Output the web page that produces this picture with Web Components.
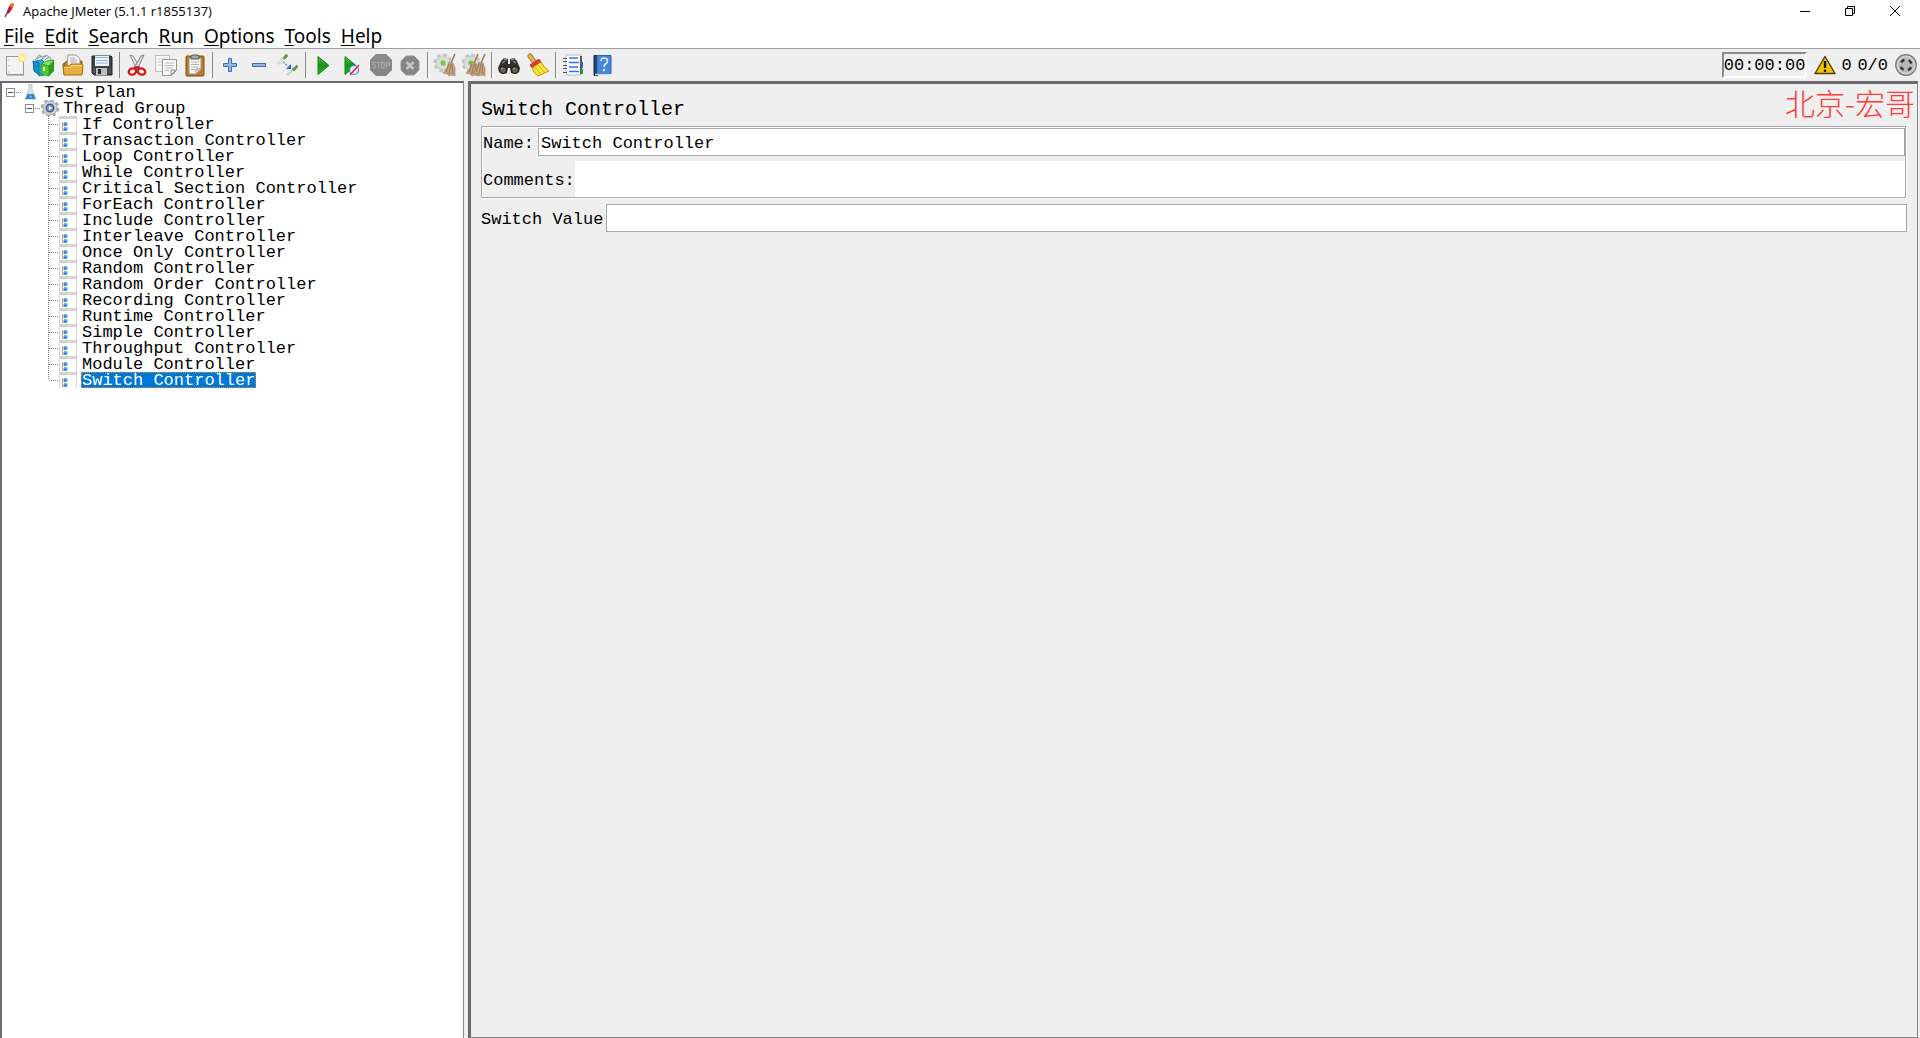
<!DOCTYPE html>
<html lang="en">
<head>
<meta charset="utf-8">
<title>Apache JMeter (5.1.1 r1855137)</title>
<style>
html, body { height: 100%; margin: 0; background: #fff; }
</style>
</head>
<body>
<jm-window></jm-window>

<script>
const svg = (body, w = 24, h = 24) =>
  `<svg width="${w}" height="${h}" viewBox="0 0 ${w} ${h}" aria-hidden="true">${body}</svg>`;

const cog = (x, y) => `<g transform="translate(${x} ${y})"><circle r="8" fill="none" stroke="#c3c5c0" stroke-width="3" stroke-dasharray="3.600 2.683"/><circle r="7" fill="#dcdedb" stroke="#c3c5c1"/><circle r="2.800" fill="#6cc93a" stroke="#b2d5a0"/></g>`;
const broom = (x) => `<g transform="translate(${x} 0)"><path d="M11 1L7 10" stroke="#a07a55" stroke-width="1.600"/><path d="M5 9l4 1 2 5v8l-3-1-3 1-2-2-4-1 4-5z" fill="#c3a17c" stroke="#a58057" stroke-width=".6"/><path d="M5 11l-3 8M7 11l-2 10M8 11l1 10" stroke="#8f6b48" stroke-width=".7"/></g>`;

const ICONS = {
  new: `<rect x="3.500" y="3.500" width="17" height="18" fill="#f3f3f3" stroke="#999b98"/><path d="M4 22.500h17" stroke="#bbb"/><path d="M6 6v2M6 12v2M6 18v2" stroke="#bbb"/><circle cx="19" cy="5" r="3.500" fill="#fff7a0" stroke="#f6e880" stroke-width="1.500"/><circle cx="19" cy="5" r="1.500" fill="#fff"/>`,
  templates: `<path d="M3 7l4-5 4 2 3-2 5 3-1 4-9 2z" fill="#dfe9ea" stroke="#8da0a4"/><path d="M5 6l4-3M9 7l5-4M13 7l4-3" stroke="#7b9095"/><path d="M1 8l6 2v12l-5-4z" fill="#1590c8" stroke="#0d6c9c"/><path d="M4 8l6-1 2 2v13l-5 1V10z" fill="#27aee6" stroke="#1478a4"/><path d="M9 11l8 2v10l-8-2z" fill="#4bcf2e" stroke="#289117" stroke-width=".8"/><path d="M9 11l6-3 7-1-5 6z" fill="#8be56c" stroke="#289117" stroke-width=".8"/><path d="M17 13l5-6v11l-5 5z" fill="#2c9c1b"/><path d="M12 14v4" stroke="#def7d5" stroke-width="2"/>`,
  open: `<path d="M2 11l4-3h15v13H3z" fill="#b57b17" stroke="#8b5d11"/><path d="M6 14L7 2h8l4 4v8z" fill="#f7f7f5" stroke="#999"/><path d="M9 5h5M9 7h7M9 9h7" stroke="#aaa"/><path d="M2 13h6l2-2h11l1 1-1 10H3z" fill="#e7ae3e" stroke="#a87012"/><path d="M3.500 14.500h6l2-2h9" stroke="#f8d57f" fill="none"/>`,
  save: `<path d="M3 3h18l1 1v18H4l-2-2V3z" fill="#3e4348" stroke="#222"/><rect x="5" y="3" width="14" height="10" fill="#eef5fb"/><path d="M5 4.500h14M6 7.500h12M6 10h12" stroke="#8fb1d8"/><rect x="6" y="15" width="11" height="7" fill="#b8bec4"/><rect x="8" y="16" width="3" height="5" fill="#252a2e"/><path d="M4 15v5M20 15v5" stroke="#60666c"/>`,
  cut: `<path d="M5 2l3 1 7 12-3 2z" fill="#eaeaea" stroke="#8d8d8d"/><path d="M19 2l-3 1-7 12 3 2z" fill="#dcdcdc" stroke="#858585"/><ellipse cx="7.500" cy="18.500" rx="3.800" ry="3" fill="#fff" stroke="#d61c1c" stroke-width="2.400" transform="rotate(-22 7.500 18.500)"/><ellipse cx="16.500" cy="18.500" rx="3.800" ry="3" fill="#fff" stroke="#d61c1c" stroke-width="2.400" transform="rotate(22 16.500 18.500)"/><path d="M10 15l2-1 2 1" stroke="#b31414" stroke-width="2" fill="none"/>`,
  copy: `<path d="M1.500 2.500h14v16h-14z" fill="#f5f5f5" stroke="#bcbcbc"/><path d="M4 6h8M4 9h5M4 12h4" stroke="#ccc"/><path d="M8.500 6.500h14v11l-5 5h-9z" fill="#f8f8f8" stroke="#999"/><path d="M11 10h9M11 12.500h9M11 15h8M11 17.500h4" stroke="#bbb"/><path d="M22 17l-5 5v-5z" fill="#ddd" stroke="#999"/>`,
  paste: `<rect x="3" y="3" width="18" height="20" rx="1" fill="#bd7720" stroke="#87500e"/><path d="M6 5h12v12l-4 4H6z" fill="#f5f5f3" stroke="#999"/><path d="M8 5V3l2-1h4l2 1v3H8z" fill="#a9aaa7" stroke="#555753"/><path d="M8 9h8M8 11.500h8M8 14h7M8 16.500h4" stroke="#b5b5b5"/><path d="M18 16l-5 5v-5z" fill="#ddd" stroke="#999"/>`,
  plus: `<path d="M10.500 5.500h3v5h5v3h-5v5h-3v-5h-5v-3h5z" fill="#8fb9e5" stroke="#3f72b3"/>`,
  minus: `<rect x="5.500" y="10.500" width="13" height="3" fill="#8fb9e5" stroke="#3f72b3"/>`,
  toggle: `<path d="M2 11l6-6" stroke="#ccd0c9" stroke-width="2.600"/><path d="M3 10l4-4" stroke="#fff"/><path d="M7 5l3-4 2 2-3 3z" fill="#6a9a58" stroke="#5a7d4d" stroke-width=".6"/><path d="M11 22l6-5" stroke="#ccd0c9" stroke-width="2.200"/><path d="M16 16l5-4 1 2-4 4z" fill="#64a04c" stroke="#5a7d4d" stroke-width=".6"/><path d="M7 9l5 4" stroke="#5b9be6" stroke-width="1.400" stroke-dasharray="2 1"/><path d="M15 11v5h-5z" fill="#1c6fd0"/>`,
  start: `<defs><linearGradient id="g" x2="0" y2="1"><stop stop-color="#53bf49"/><stop offset=".5" stop-color="#159419"/><stop offset="1" stop-color="#14c51a"/></linearGradient></defs><path d="M7 3.500l11 9-11 9z" fill="url(#g)" stroke="#0c8417"/>`,
  startnow: `<defs><linearGradient id="g" x2="0" y2="1"><stop stop-color="#53bf49"/><stop offset=".5" stop-color="#159419"/><stop offset="1" stop-color="#14c51a"/></linearGradient></defs><path d="M5 3.500l11 9-11 9z" fill="url(#g)" stroke="#0c8417"/><circle cx="14" cy="17" r="4.500" fill="#e0ebfa" stroke="#4a7fc8" stroke-width="1.200"/><path d="M10 22l9-10" stroke="#dd2c2c" stroke-width="1.400"/>`,
  stop: `<path d="M7 1h10l6 6v10l-6 6H7l-6-6V7z" fill="#858585"/><path d="M7.500 2h9l5.500 5.500V12H2V7.500z" fill="#8b8b8b"/><g fill="none" stroke="#a8a8a8" stroke-width="1.200"><path d="M6.500 9.500H4v2.500h2.300v3H3.500M7.500 9.500h4M9.500 9.500v6M12.500 9.500h2.700v5.300h-2.700zM17.500 15.500v-6h3v3h-3"/></g>`,
  shutdown: `<path d="M8 3h8l5 5v9l-5 5H8l-5-5V8z" fill="#858585" stroke="#999"/><path d="M8.500 9l7 7M15.500 9l-7 7" stroke="#c4c4c4" stroke-width="2.600"/>`,
  clear: cog(10, 10) + broom(11),
  clearall: cog(9, 10) + broom(5) + broom(12),
  search: `<path d="M7 5l4 1v5h2V6l4-1 3 3 3 7-1 4-4 2-4-1-1-5h-2l-1 5-4 1-4-2-1-4 3-7z" fill="#34322f"/><path d="M7 6l3 1M14 7l3-1M5 10l3-2M16 8l3 2" stroke="#8b8780" stroke-width="1.400"/><circle cx="6" cy="17" r="3.500" fill="#65605a" stroke="#171614"/><circle cx="18" cy="17" r="3.500" fill="#65605a" stroke="#171614"/><path d="M4 16l2-1M16 16l2-1" stroke="#c89d8c"/>`,
  broom: `<path d="M4 3l5 7" stroke="#b9770f" stroke-width="5" stroke-linecap="round"/><path d="M4 3l5 7" stroke="#e9b45c" stroke-width="3" stroke-linecap="round"/><path d="M4 12l9-6 2 3-9 6z" fill="#e03a35" stroke="#a51d1d" stroke-width=".6"/><path d="M6 15l9-6q3 6 8 9l-11 5q-5-3-6-8z" fill="#f7e23c" stroke="#b79507"/><path d="M9 14l6 8M12 12l7 8" stroke="#c9ab20" stroke-width=".8"/>`,
  log: `<rect x="5" y="2" width="15" height="20" fill="#fff" stroke="#bbb"/><path d="M20 3v18" stroke="#222" stroke-width="1.400"/><path d="M20 9h2v6h-2z" fill="#2d61e0"/><path d="M20 16h2v5h-2z" fill="#22a022"/><path d="M8 5h9M8 9.500h10M8 14h9M8 18.500h10" stroke="#2f72e8" stroke-width="1.300"/><g stroke="#555"><path d="M2 5.500h4M2 8.500h4M2 12.500h4M2 15.500h4M2 19.500h4"/></g>`,
  help: `<path d="M4 2.500h4v20H4z" fill="#203d61" stroke="#152b46"/><path d="M7 2.500h14v18H7z" fill="#4888d7" stroke="#2b65ad"/><path d="M5 21.500h15" stroke="#d8dbe0" stroke-width="1.500"/><path d="M11 8q0-3 3.200-3T17.500 8q0 2-2 3-1.500 1-1.500 3" fill="none" stroke="#dcecff" stroke-width="1.600"/><circle cx="14" cy="17" r="1.200" fill="#dcecff"/>`,
  warn: `<path d="M12 3.500L22 20.500H2z" fill="#f5c400" stroke="#4c3f06" stroke-width="1.400" stroke-linejoin="round"/><path d="M12 8v7" stroke="#111" stroke-width="2.400"/><circle cx="12" cy="17.800" r="1.300" fill="#111"/>`,
  threads: `<circle cx="12" cy="12" r="10.300" fill="#cfcfcf" stroke="#777" stroke-width="1.200"/><circle cx="12" cy="12" r="7.800" fill="#b5b5b5" stroke="#ccc"/><circle cx="12" cy="12" r="5.500" fill="none" stroke="#303030" stroke-width="2.400" stroke-dasharray="4 4.639" stroke-dashoffset="-2.300"/>`
};

const NODE_ICONS = {
  plan: svg(`<path d="M8 0h3v6l4 9H4l4-9z" fill="#dfe4ea" stroke="#b3bac2" stroke-width=".8"/><path d="M6.500 10h6l2 5H4.500z" fill="#2580d8"/><path d="M8 12h2v2" stroke="#9ccaf5" fill="none"/>`, 20, 16),
  group: svg(`<circle cx="10" cy="8" r="8" fill="none" stroke="#a9abad" stroke-width="2.600" stroke-dasharray="3.600 2.683"/><circle cx="10" cy="8" r="7" fill="#d3d4d6" stroke="#a9abad"/><circle cx="10" cy="8" r="3.800" fill="#7f9ac6" stroke="#3e5a8a" stroke-width="1.400"/><path d="M9 6l3 2-3 2z" fill="#fff"/>`, 20, 16),
  leaf: svg(`<rect x="0" y="0" width="18" height="16" fill="#fff"/><path d="M0 1.500h18" stroke="#cfcfcf" stroke-width="3"/><path d="M9 1.500h7" stroke="#dedede"/><path d="M.5 0v16M17.500 3v13" stroke="#d5d5d5"/><path d="M3.500 6v9M3.500 8.500h2M3.500 14.500h2" stroke="#aaa" fill="none"/><circle cx="6.500" cy="8" r="2" fill="#2f7fd6"/><circle cx="6.500" cy="13" r="2" fill="#2f7fd6"/><path d="M5.500 7h2M5.500 12h2" stroke="#a9cdf2"/>`, 18, 16)
};

function define(name, css, html) {
  customElements.define(name, class extends HTMLElement {
    constructor() {
      super();
      const t = document.createElement('template');
      t.innerHTML = `<style>*{box-sizing:border-box}${css}</style>${typeof html === 'function' ? html(this) : html}`;
      this.attachShadow({ mode: 'open' }).append(t.content.cloneNode(true));
    }
  });
}

define('jm-titlebar', `
  :host { display: flex; align-items: center; height: 24px; padding: 0 3px 2px 4px; background: #fff;
    font: 13px/22px "Open Sans", "Noto Sans CJK SC", sans-serif; color: #000; }
  .title { flex: 1; margin-left: 7px; }
  svg { display: block; }
  button { width: 45px; height: 20px; padding: 0; border: 0; background: none; display: grid; place-items: center; }`,
  `${svg(`<path d="M1 14l2-4" stroke="#5c2a6b" stroke-width="1.200"/><path d="M3 11Q3 4 8 0l2 1Q8 8 4 11z" fill="#c81f3c"/><path d="M6 3l2-3 2 1-1 4z" fill="#ef7b25"/><path d="M3 11q0-3 1-5l2 3z" fill="#7d1f69"/>`, 12, 16)}
  <span class="title">Apache JMeter (5.1.1 r1855137)</span>
  <button aria-label="Minimize">${svg('<path d="M1 6.500h10" stroke="#000"/>', 12, 12)}</button>
  <button aria-label="Restore">${svg('<path d="M1.500 3.500h7v7h-7zM3.500 3V1.500h7v7H9" fill="none" stroke="#000"/>', 12, 12)}</button>
  <button aria-label="Close">${svg('<path d="M1 1l10 10M11 1L1 11" stroke="#000"/>', 12, 12)}</button>`);

define('jm-menubar', `
  :host { display: block; background: #fff; }
  nav { display: flex; height: 24px; padding-left: 4px; gap: 10px; }
  button { display: block; border: 0; padding: 0; background: none; color: #000;
    font: 19px/24px "Noto Sans", "Noto Sans CJK SC", sans-serif; }
  button::first-letter { text-decoration: underline; text-decoration-thickness: 1px; text-underline-offset: 2px; }`,
  `<nav>${['File', 'Edit', 'Search', 'Run', 'Options', 'Tools', 'Help'].map(t => `<button>${t}</button>`).join('')}</nav>`);

define('jm-tool', `
  :host { display: block; }
  button { display: grid; place-items: center; width: 29px; height: 32px; padding: 0; border: 0; background: none; }
  svg { display: block; }`,
  el => `<button aria-label="${el.getAttribute('icon')}">${svg(ICONS[el.getAttribute('icon')])}</button>`);

define('jm-separator', `
  :host { display: flex; justify-content: center; width: 6px; height: 26px; }
  i { width: 1px; background: #8a8a8a; }`, `<i></i>`);

const GROUPS = [['new', 'templates', 'open', 'save'], ['cut', 'copy', 'paste'], ['plus', 'minus', 'toggle'],
  ['start', 'startnow', 'stop', 'shutdown'], ['clear', 'clearall'], ['search', 'broom'], ['log', 'help']];

define('jm-toolbar', `
  :host { display: flex; align-items: center; justify-content: space-between; height: 33px; padding-right: 2px;
    border-top: 1px solid #a0a0a0; background: #efefef;
    font: 17px/24px "Liberation Mono", "Noto Sans CJK SC", monospace; color: #000; }
  .tools, .status { display: flex; align-items: center; }
  output { display: block; height: 26px; border: 2px solid; border-color: #8a8a8a #fff #fff #8a8a8a; }
  .status > svg { display: block; }
  .status > span { padding-top: 2px; }
  .warn { margin: 0 4px 0 6px; }
  .errors { width: 16px; }
  .active { margin-right: 6px; }`,
  `<div class="tools">${GROUPS.map(g => g.map(i => `<jm-tool icon="${i}"></jm-tool>`).join('')).join('<jm-separator></jm-separator>')}</div>
  <div class="status"><output>00:00:00</output>
    <svg class="warn" width="24" height="24" viewBox="0 0 24 24" aria-hidden="true">${ICONS.warn}</svg><span class="errors">0</span><span class="active">0/0</span>${svg(ICONS.threads)}</div>`);

define('jm-node', `
  :host { display: block; }
  .row { display: flex; align-items: center; height: 16px; }
  svg { display: block; flex: none; }
  .label { height: 16px; line-height: 18px; margin-left: 2px; padding: 0 1px; white-space: pre; }
  :host([kind=leaf]) .label { margin-left: 4px; }
  :host([selected]) .label { background: #0078d7; color: #fff; outline: 1px dotted #e08a28; outline-offset: -1px; }
  .kids { padding-left: 19px; }
  :host([kind=group]) .kids { padding-left: 21px; }`,
  el => {
    const kind = el.getAttribute('kind');
    const guide = kind === 'leaf'
      ? svg(`<path d="M4.500 0v${el.hasAttribute('last') ? 8 : 16}M5 8.500h10" stroke="#808080" stroke-dasharray="1 1"/>`, 15, 16)
      : svg(`<rect x="2.500" y="4.500" width="8" height="8" fill="#fdfdfd" stroke="#8c8c8c"/><path d="M4 8.500h5" stroke="#2c4a8c"/><path d="M12 8.500h5" stroke="#808080" stroke-dasharray="1 1"/>`, 17, 16);
    return `<div class="row">${guide}${NODE_ICONS[kind]}<span class="label">${el.getAttribute('label')}</span></div><div class="kids"><slot></slot></div>`;
  });

const CONTROLLERS = ['If', 'Transaction', 'Loop', 'While', 'Critical Section', 'ForEach', 'Include', 'Interleave', 'Once Only',
  'Random', 'Random Order', 'Recording', 'Runtime', 'Simple', 'Throughput', 'Module', 'Switch'];

define('jm-tree', `
  :host { display: block; background: #fff; border: 2px solid #6b6b6f; border-width: 2px 1px 0 2px; border-right-color: #8a8a8f;
    padding: 1px 0 0 2px; font: 17px/16px "Liberation Mono", "Noto Sans CJK SC", monospace; color: #000; }`,
  `<jm-node kind="plan" label="Test Plan"><jm-node kind="group" label="Thread Group">${
    CONTROLLERS.map((c, i) => `<jm-node kind="leaf" label="${c} Controller"${i === CONTROLLERS.length - 1 ? ' last selected' : ''}></jm-node>`).join('')
  }</jm-node></jm-node>`);

define('jm-form', `
  :host { display: block; position: relative; background: #efefef; border: 3px solid #6b6b6f; border-right: 1px solid #85858c; border-bottom: 1px solid #85858c;
    padding: 12px 10px 0 10px; font: 17px/24px "Liberation Mono", "Noto Sans CJK SC", monospace; color: #000; }
  h1 { margin: 0 0 2px; font-size: 20px; line-height: 28px; font-weight: 400; }
  .box { border: 1px solid #a6a6ac; box-shadow: 1px 1px #fff, inset 1px 1px #fff; padding: 1px 0 0 1px; margin-right: 1px; }
  .field { display: flex; align-items: center; }
  .name { gap: 4px; }
  .comments { margin-top: 5px; }
  .value { margin-top: 6px; gap: 3px; }
  label { padding-top: 3px; }
  input { flex: 1; min-width: 0; height: 28px; margin: 0; padding: 2px 2px 0; border: 1px solid #a6a6ac; border-radius: 0; background: #fff; font: inherit; color: inherit; }
  .comments input { height: 36px; border: 0; }
  .mark { position: absolute; top: 0; right: 2px; font: 300 30px/36px "Noto Sans CJK SC", sans-serif; color: #ff3b3b; }`,
  `<h1>Switch Controller</h1>
  <div class="box">
    <div class="field name"><label for="n">Name:</label><input id="n" value="Switch Controller"></div>
    <div class="field comments"><label for="c">Comments:</label><input id="c"></div>
  </div>
  <div class="field value"><label for="v">Switch Value</label><input id="v"></div>
  <div class="mark" lang="zh-CN">北京-宏哥</div>`);

define('jm-window', `
  :host { display: flex; flex-direction: column; min-height: 100vh; background: #efefef; }
  main { flex: 1; display: grid; grid-template-columns: minmax(200px, 464fr) minmax(400px, 1450fr); column-gap: 4px; padding-right: 2px; }`,
  `<jm-titlebar></jm-titlebar><jm-menubar></jm-menubar><jm-toolbar></jm-toolbar><main><jm-tree></jm-tree><jm-form></jm-form></main>`);
</script>
</body>
</html>
